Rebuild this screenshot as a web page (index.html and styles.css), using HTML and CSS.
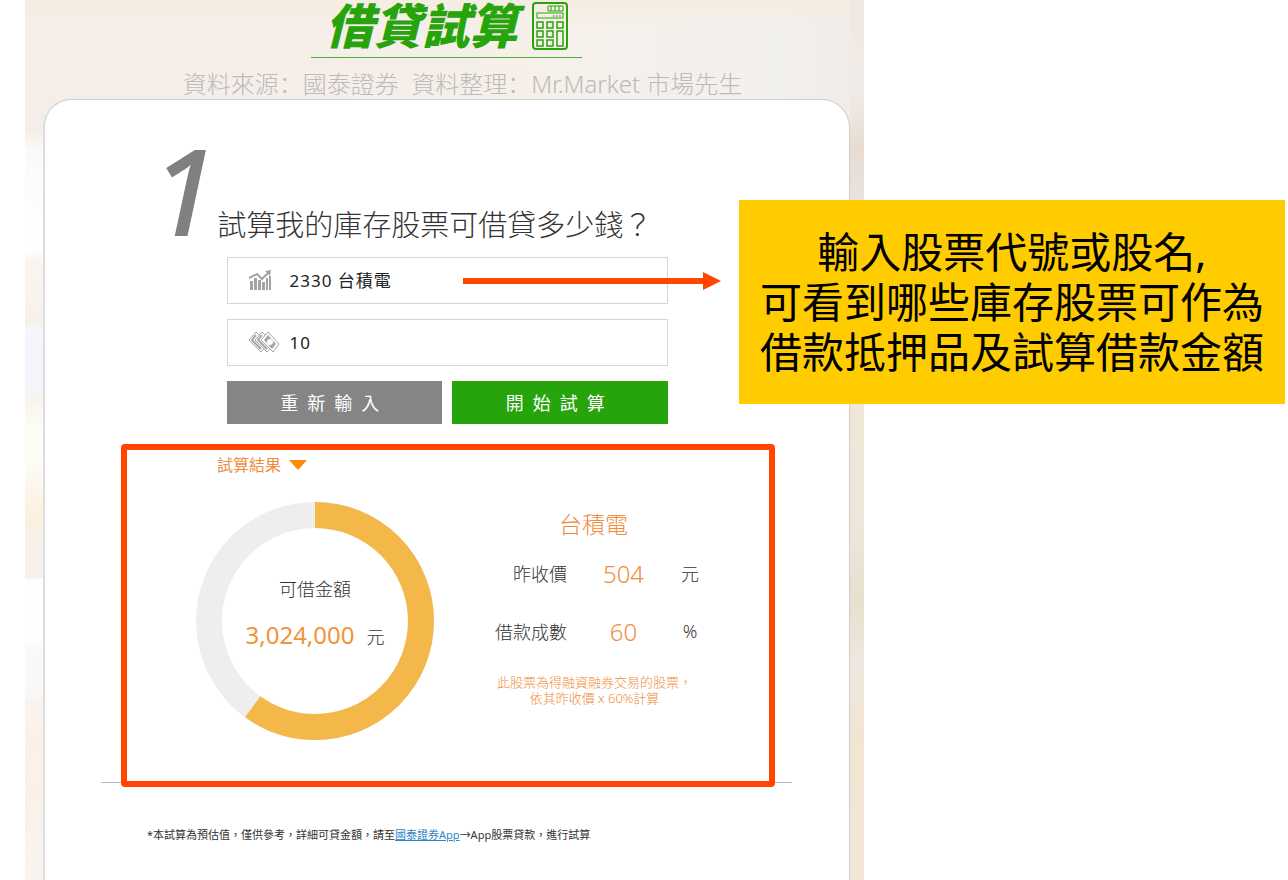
FILE: index.html
```html
<!DOCTYPE html>
<html lang="zh-Hant">
<head>
    <meta charset="UTF-8">
    <meta name="viewport" content="width=device-width, initial-scale=1.0">
    <title>借貸試算</title>
    <link rel="stylesheet" href="styles.css">
</head>
<body>
    <main class="stage">
        <header class="header">
            <h1 class="title">
                <span>借貸試算</span>
                <svg class="calc-icon" viewBox="0 0 36 48" fill="none" stroke="#27a40c" aria-hidden="true">
                    <rect x="1" y="1" width="34" height="46" rx="3" stroke-width="2"/>
                    <path d="M16 4h15v5H16zM19 4v5M23 4v5M27 4v5" stroke-width="1"/>
                    <rect x="5" y="11" width="26" height="5" stroke-width="1"/>
                    <path d="M21 14h8" stroke-width="1" stroke-dasharray="2 1"/>
                    <path d="M5 20h6v6H5zM15 20h6v6h-6zM25 20h6v6h-6zM5 29h6v6H5zM15 29h6v6h-6zM5 38h6v6H5zM15 38h6v6h-6zM25 29h6v15h-6z" stroke-width="1.5"/>
                </svg>
            </h1>
            <p class="source" lang="zh-Hans">資料來源：國泰證券&nbsp; 資料整理：Mr.Market 市場先生</p>
        </header>

        <section class="card">
            <h2 class="step">
                <span class="step-number">1</span>
                <span class="step-text">試算我的庫存股票可借貸多少錢？</span>
            </h2>

            <form class="form">
                <div class="field">
                    <label for="stock" aria-label="股票">
                        <svg class="field-icon" viewBox="0 0 32 24" aria-hidden="true">
                            <path d="M1 9l8-4 5 5 7-7" fill="none" stroke="#a3a3a3" stroke-width="2"/>
                            <path d="M17 2l6-1-1 6z" fill="#a3a3a3"/>
                            <path d="M2 12h3v9H2zM6 9h3v12H6zM10 11h3v10h-3zM14 13h3v8h-3zM18 9h2v12h-2zM21 7h2v14h-2z" fill="#a3a3a3"/>
                        </svg>
                    </label>
                    <input type="text" id="stock" value="2330 台積電">
                    <svg class="arrow" viewBox="0 0 258 18" aria-hidden="true">
                        <path d="M0 6h240V0l18 9-18 9v-6H0z" fill="#ff4500"/>
                    </svg>
                </div>
                <div class="field">
                    <label for="amount" aria-label="張數">
                        <svg class="field-icon" viewBox="0 0 32 24" fill="#fff" stroke="#a3a3a3" aria-hidden="true">
                            <path d="M8 1l12 12-7 8L1 9z"/>
                            <path d="M8 4L4 9l9 9" fill="none" stroke-width="2"/>
                            <path d="M14 1l12 12-7 8L7 9z"/>
                            <path d="M14 4l-4 5 9 9" fill="none" stroke-width="2"/>
                            <path d="M20 1l11 12-6 8L13 9z"/>
                            <path d="M20 4l8 9-4 5-8-9z" fill="#a3a3a3" stroke="none"/>
                            <circle cx="22" cy="11" r="3" stroke="none"/>
                        </svg>
                    </label>
                    <input type="text" id="amount" value="10">
                </div>
                <div class="buttons">
                    <button type="reset" class="btn">重新輸入</button>
                    <button type="button" class="btn btn-green">開始試算</button>
                </div>
            </form>

            <section class="result">
                <h3 class="result-title">試算結果</h3>
                <div class="result-body">
                    <div class="chart">
                        <svg class="donut" viewBox="0 0 240 240" aria-hidden="true">
                            <circle cx="120" cy="120" r="106" fill="none" stroke="#eee" stroke-width="26"/>
                            <circle cx="120" cy="120" r="106" fill="none" stroke="#f4b74a" stroke-width="26" pathLength="100" stroke-dasharray="60 40" transform="rotate(-90 120 120)"/>
                        </svg>
                        <div class="chart-text">
                            <p class="label">可借金額</p>
                            <p class="total"><span class="number">3,024,000</span><span class="label">元</span></p>
                        </div>
                    </div>
                    <div class="detail">
                        <h4 class="stock-name">台積電</h4>
                        <table class="detail-table">
                            <tr>
                                <th>昨收價</th>
                                <td class="value">504</td>
                                <td>元</td>
                            </tr>
                            <tr>
                                <th>借款成數</th>
                                <td class="value">60</td>
                                <td>%</td>
                            </tr>
                        </table>
                        <p class="note">此股票為得融資融券交易的股票，<br>依其昨收價 x 60%計算</p>
                    </div>
                </div>
            </section>
            <hr class="line">
            <p class="remark">*本試算為預估值，僅供參考，詳細可貸金額，請至<a href="#">國泰證券App</a>→App股票貸款，進行試算</p>
        </section>
    </main>

    <aside class="callout">輸入股票代號或股名,<br>可看到哪些庫存股票可作為<br>借款抵押品及試算借款金額</aside>
</body>
</html>
```
FILE: styles.css
```css
* {
    box-sizing: border-box;
}
body {
    position: relative;
    margin: 0;
    padding: 0 424px 0 25px;
    background: #fff;
    color: #333;
    font-family: "Noto Sans", "Noto Sans CJK TC", sans-serif;
    font-size: 18px;
    overflow-x: hidden;
}
h1, h2, h3, h4, p {
    margin: 0;
    font-weight: 300;
}
.stage {
    min-height: 100vh;
    padding: 0 14px 0 18px;
    background:
        linear-gradient(#f1e7e2 0, #f0ebe7 90px, #e8dcd2 150px, #ebe2dc 200px, #f0e6d8 430px, #ede6dc 530px, #e8dfcf 600px, #efe6df 660px, #f1e5d4 740px, #f2e7d6 880px) right / 14px 100% no-repeat,
        linear-gradient(#f6ede1, rgba(246, 237, 225, 0) 24px) top / 100% 24px no-repeat,
        linear-gradient(90deg, #f5eee8, #f5eee9 40%, #f6f0e9 60%, #f2f0ee 90%, #f1ebe7) top / 100% 130px no-repeat,
        linear-gradient(#f5eee8 130px, #fafafa 150px, #fff 250px, #faf5f1 260px, #f8f1ea 325px, #f6f5fb 326px, #f6f4fb 390px, #f9f3ee 400px, #fdfdf8 430px, #fdfcf6 460px, #faf0df 520px, #f8f1ec 540px, #f8f0ec 578px, #fefefe 579px, #fefefe 640px, #faf8f8 650px, #faf8f7 695px, #faf3ee 700px, #fbf1e6 740px, #f8f3f0 880px);
}
.header {
    display: flex;
    flex-direction: column;
    align-items: center;
    height: 99px;
}
.title {
    display: flex;
    flex: none;
    align-items: center;
    gap: 14px;
    height: 58px;
    padding: 2px 14px 8px;
    border-bottom: 1px solid #4db135;
    color: #27a40c;
    font-size: 48px;
    font-weight: 900;
    font-style: italic;
    line-height: 48px;
}
.calc-icon {
    width: 36px;
    height: 48px;
}
.source {
    padding-left: 32px;
    color: #bbb;
    font-family: "Noto Sans", "Noto Sans CJK SC", sans-serif;
    font-size: 24px;
    line-height: 52px;
    white-space: nowrap;
}
.card {
    min-height: calc(100vh - 99px);
    border: 1px solid #ccc;
    border-left: 2px solid #ddd;
    border-bottom: 0;
    border-radius: 28px 28px 0 0;
    background: #fff;
}
.step {
    display: flex;
    align-items: baseline;
    height: 157px;
    padding: 15px 0 0 106px;
    line-height: 150px;
}
.step-number {
    color: #808080;
    font-size: 120px;
    font-style: italic;
    font-weight: 500;
}
.step-text {
    font-size: 29px;
    white-space: nowrap;
}
.form {
    display: flex;
    flex-direction: column;
    gap: 15px;
    width: 441px;
    margin: 0 auto;
}
.field {
    position: relative;
    display: flex;
    align-items: center;
    height: 47px;
    padding-left: 20px;
    border: 1px solid #d5d5d5;
}
.field-icon {
    display: block;
    width: 32px;
    height: 24px;
}
.field input {
    flex: 1;
    min-width: 0;
    height: 24px;
    padding: 0 10px;
    border: 0;
    outline: 0;
    background: none;
    color: #222;
    font-family: inherit;
    font-size: 17px;
    line-height: 24px;
    letter-spacing: 1px;
}
.arrow {
    position: absolute;
    top: 14px;
    left: 235px;
    width: 258px;
    height: 18px;
}
.buttons {
    display: flex;
    gap: 10px;
}
.btn {
    flex: 1;
    height: 43px;
    padding: 0 0 2px;
    border: 0;
    background: #858585;
    color: #fff;
    font-family: inherit;
    font-size: 18px;
    letter-spacing: 9px;
    cursor: pointer;
}
.btn-green {
    background: #27a40c;
}
.result {
    position: relative;
    z-index: 1;
    height: 343px;
    margin: 20px 74px 0 76px;
    border: 6px solid #ff4500;
    border-radius: 4px;
}
.result-title {
    display: flex;
    align-items: center;
    gap: 8px;
    padding: 3px 0 0 90px;
    color: #f08c3c;
    font-size: 16px;
    font-weight: 400;
    line-height: 24px;
}
.result-title::after {
    content: "";
    border: 9px solid transparent;
    border-top: 10px solid #ff8c00;
    border-bottom: 0;
}
.result-body {
    display: flex;
    gap: 60px;
    padding: 24px 0 0 68px;
}
.chart {
    display: grid;
    flex: none;
    width: 240px;
    height: 240px;
}
.donut,
.chart-text {
    grid-area: 1 / 1;
}
.chart-text {
    padding-top: 72px;
    text-align: center;
}
.label {
    font-size: 18px;
    line-height: 32px;
}
.total {
    display: flex;
    align-items: baseline;
    justify-content: center;
    gap: 12px;
    line-height: 60px;
}
.number {
    color: #f09437;
    font-size: 24px;
    font-weight: 400;
}
.detail {
    width: 205px;
    padding-top: 7px;
    text-align: center;
}
.stock-name {
    padding-right: 8px;
    color: #f08c3c;
    font-size: 23px;
    line-height: 32px;
}
.detail-table {
    width: 100%;
    margin-top: 4px;
    border-collapse: collapse;
}
.detail-table th,
.detail-table td {
    height: 58px;
    padding: 0;
    font-weight: 300;
}
.detail-table th {
    width: 72px;
    text-align: right;
}
.detail-table td:last-child {
    width: 20px;
}
.detail-table .value {
    color: #f08c3c;
    font-size: 24px;
}
.note {
    margin-top: 14px;
    padding-right: 6px;
    color: #f08c3c;
    font-size: 13px;
    line-height: 16px;
    white-space: nowrap;
}
.line {
    height: 1px;
    margin: -5px 57px 0 56px;
    border: 0;
    background: #bbb;
}
.remark {
    padding: 43px 0 0 102px;
    font-size: 11px;
    font-weight: 400;
    line-height: 18px;
}
.remark a {
    color: #2f86c8;
}
.callout {
    position: absolute;
    top: 200px;
    right: 3px;
    width: 546px;
    padding: 27px 0;
    background: #fc0;
    color: #000;
    font-size: 42px;
    line-height: 50px;
    text-align: center;
    white-space: nowrap;
}
```
